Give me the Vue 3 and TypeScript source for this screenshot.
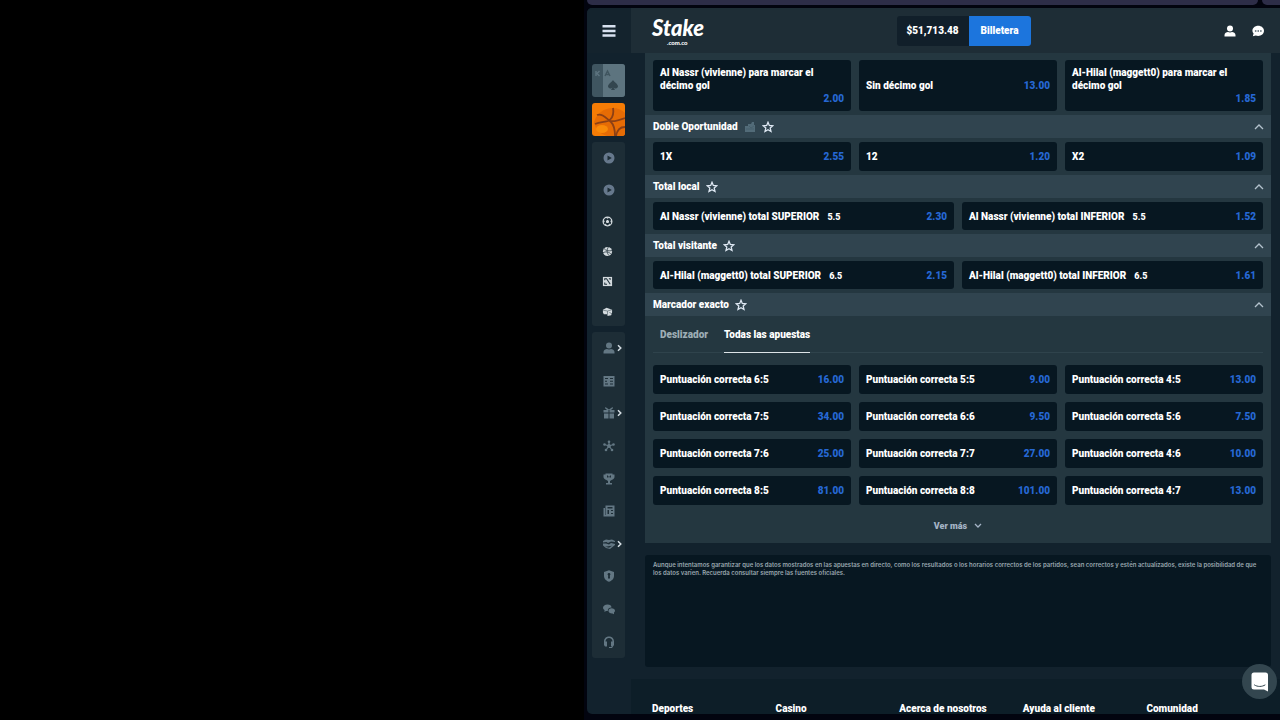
<script setup lang="ts">
import { ref } from 'vue'

interface Outcome {
  name: string
  odds: string
  line?: string
}

interface Market {
  title: string
  columns: 2 | 3
  combo?: boolean
  outcomes: Outcome[]
}

interface NavItem {
  icon: string
  label: string
  expandable?: boolean
}

const nextGoal: Outcome[] = [
  { name: 'Al Nassr (vivienne) para marcar el décimo gol', odds: '2.00' },
  { name: 'Sin décimo gol', odds: '13.00' },
  { name: 'Al-Hilal (maggett0) para marcar el décimo gol', odds: '1.85' },
]

const markets: Market[] = [
  {
    title: 'Doble Oportunidad',
    columns: 3,
    combo: true,
    outcomes: [
      { name: '1X', odds: '2.55' },
      { name: '12', odds: '1.20' },
      { name: 'X2', odds: '1.09' },
    ],
  },
  {
    title: 'Total local',
    columns: 2,
    outcomes: [
      { name: 'Al Nassr (vivienne) total SUPERIOR', line: '5.5', odds: '2.30' },
      { name: 'Al Nassr (vivienne) total INFERIOR', line: '5.5', odds: '1.52' },
    ],
  },
  {
    title: 'Total visitante',
    columns: 2,
    outcomes: [
      { name: 'Al-Hilal (maggett0) total SUPERIOR', line: '6.5', odds: '2.15' },
      { name: 'Al-Hilal (maggett0) total INFERIOR', line: '6.5', odds: '1.61' },
    ],
  },
]

const scores: Outcome[] = [
  ['6:5', '16.00'],
  ['5:5', '9.00'],
  ['4:5', '13.00'],
  ['7:5', '34.00'],
  ['6:6', '9.50'],
  ['5:6', '7.50'],
  ['7:6', '25.00'],
  ['7:7', '27.00'],
  ['4:6', '10.00'],
  ['8:5', '81.00'],
  ['8:8', '101.00'],
  ['4:7', '13.00'],
].map(([score, odds]) => ({ name: `Puntuación correcta ${score}`, odds }))

const sportsNav: NavItem[] = [
  { icon: 'play', label: 'En directo' },
  { icon: 'play', label: 'Próximos' },
  { icon: 'soccer', label: 'Fútbol' },
  { icon: 'ball', label: 'Baloncesto' },
  { icon: 'pitch', label: 'eSports' },
  { icon: 'box', label: 'Más deportes' },
]

const accountNav: NavItem[] = [
  { icon: 'user', label: 'Perfil', expandable: true },
  { icon: 'slip', label: 'Apuestas' },
  { icon: 'gift', label: 'Promociones', expandable: true },
  { icon: 'hub', label: 'Afiliado' },
  { icon: 'trophy', label: 'VIP' },
  { icon: 'news', label: 'Blog' },
  { icon: 'hands', label: 'Patrocinios', expandable: true },
  { icon: 'shield', label: 'Juego responsable' },
  { icon: 'chats', label: 'Foro' },
  { icon: 'headset', label: 'Soporte' },
]

const footerLinks = ['Deportes', 'Casino', 'Acerca de nosotros', 'Ayuda al cliente', 'Comunidad']
const tabs = ['Deslizador', 'Todas las apuestas']
const activeTab = ref('Todas las apuestas')
</script>

<template>
  <div class="stage">
    <div class="blank"></div>
    <div class="browser">
      <div class="tabstrip"><span class="strip-main"></span><span class="strip-end"></span></div>
      <div class="app">
        <aside class="sidebar">
          <button class="menu" aria-label="Menú">
            <svg viewBox="0 0 14 12" width="14" height="12"><path d="M.5 0h13v2.500H.5zM.5 4.700h13v2.500H.5zM.5 9.300h13v2.500H.5z" /></svg>
          </button>
          <nav class="rail">
            <a class="tile" href="#casino" aria-label="Casino">
              <svg viewBox="0 0 33 33">
                <rect width="33" height="33" rx="3" fill="#3f5560" />
                <path d="M11 0h19a3 3 0 0 1 3 3v27a3 3 0 0 1-3 3H11z" fill="#5d747f" />
                <path d="M4 7v5M7.500 7L5 9.500 7.500 12" stroke="#5d7480" stroke-width="1.400" fill="none" />
                <path d="M13 12l2.500-5 2.500 5M14 10.500h3" stroke="#40555f" stroke-width="1.400" fill="none" />
                <path d="M21 16c-1 2-5 4-5 6.500a2.500 2.500 0 0 0 4.500 1L19 26h4l-1.500-2.500a2.500 2.500 0 0 0 4.500-1c0-2.500-4-4.500-5-6.500z" fill="#33464f" />
              </svg>
            </a>
            <a class="tile" href="#deportes" aria-label="Deportes">
              <svg viewBox="0 0 33 33">
                <rect width="33" height="33" rx="3" fill="#f57c05" />
                <path d="M2 19C5 10 12 5 21 5c5 0 9 2 12 5v20a3 3 0 0 1-3 3H15C8 31 3 26 2 19z" fill="#e66c05" />
                <ellipse cx="10" cy="26" rx="6" ry="4" fill="#f98b09" />
                <path d="M5 12c5-2 9 3 14 7 3 3 4 8 4 14M21 5c1 6-1 11-5 13-4 1-9 1-13 3M18 18c5 1 10-1 15-3M33 24c-5 0-8 3-9 9" fill="none" stroke="#8c4015" stroke-width="1.800" />
              </svg>
            </a>
            <ul class="group sports">
              <li v-for="item in sportsNav" :key="item.label">
                <a href="#" :aria-label="item.label" :class="item.icon">
                  <svg v-if="item.icon === 'play'" viewBox="0 0 12 12" width="12" height="12"><path fill-rule="evenodd" d="M6 .5a5.500 5.500 0 1 0 0 11 5.500 5.500 0 0 0 0-11zM4.500 3.500L8.800 6 4.500 8.500z" /></svg>
                  <svg v-else-if="item.icon === 'soccer'" viewBox="0 0 12 12" width="11" height="11"><circle cx="6" cy="6" r="4.800" fill="none" stroke="currentColor" stroke-width="1.300" /><path d="M6 4.200l1.800 1.300-.6 2.100H4.800l-.6-2.100zM3.500 1.300h5L6 3zM1 4l2 1.500L1.500 8.500zM11 4L9 5.500l1.500 3zM2.800 10l1.300-1.800 1.500 2.800zM9.200 10L7.900 8.200 6.400 11z" /></svg>
                  <svg v-else-if="item.icon === 'ball'" viewBox="0 0 12 12" width="11" height="11"><circle cx="6" cy="6" r="5" /><path d="M2 2.500c2 3 6 3 9 2.500M7 1C5 4 5 8 8 10.700M1 7.500c3-2 7-1 9 1.500" fill="none" stroke="#1e2f38" stroke-width=".8" /></svg>
                  <svg v-else-if="item.icon === 'pitch'" viewBox="0 0 12 12" width="11" height="11"><path d="M1 1h10v10H1z" /><path d="M3 4.500V3h2l4 6M9 4V3H7.500M3 7v2h2.500" fill="none" stroke="#1e2f38" stroke-width="1.100" /></svg>
                  <svg v-else viewBox="0 0 12 12" width="11" height="11"><path d="M1 4l4-2 6 2v3l-1 3-4 1V9L2 9 1 7z" /><path d="M1 4.500l5 1L11 4M6 5.500V9M8 7l3 1.500" fill="none" stroke="#53636b" stroke-width=".7" /></svg>
                </a>
              </li>
            </ul>
            <ul class="group account">
              <li v-for="item in accountNav" :key="item.label">
                <a href="#" :aria-label="item.label">
                  <svg viewBox="0 0 12 12" width="12" height="12">
                    <template v-if="item.icon === 'user'"><circle cx="6" cy="3.500" r="3" /><path d="M.5 11.500v-1.500C.5 8 2.500 7 4 7c1 .6 3 .6 4 0 1.500 0 3.500 1 3.500 3v1.500z" /></template>
                    <path v-else-if="item.icon === 'slip'" fill-rule="evenodd" d="M.5 1h11v10.500H.5zM2 3v1h3V3zm5 0v1h3V3zM2 5.700v1h2v-1zm5 0v1h3v-1zM2 8.500v1h3v-1zm5 0v1h3v-1z" />
                    <path v-else-if="item.icon === 'gift'" d="M2.500 0L6 2.500 9.500 0l.5 1.200L8 3h3.500v2.500h-5V3h-1v2.500h-5V3H4L2 1.200zM1 6.500h4.500v5H1zM6.500 6.500H11v5H6.500z" />
                    <template v-else-if="item.icon === 'hub'"><path d="M6 6V2M6 6l4.500-1.500M6 6l3 4M6 6l-3 4M6 6L1.500 4.500" stroke="currentColor" stroke-width="1.200" /><circle cx="6" cy="6" r="1.900" /><circle cx="6" cy="1.700" r="1.300" /><circle cx="10.500" cy="4.500" r="1.300" /><circle cx="9" cy="10" r="1.300" /><circle cx="3" cy="10" r="1.300" /><circle cx="1.500" cy="4.500" r="1.300" /></template>
                    <path v-else-if="item.icon === 'trophy'" fill-rule="evenodd" d="M2.500.5h7v1h2v2.500c0 1.500-1.500 2.500-2.500 2.700L7 8v2h2v1.500H3V10h2V8L3 6.700C2 6.500.5 5.500.5 4V1.500h2zM4 2.500v2h1.500v-1h1v1H8v-2H7v.7H5v-.7z" />
                    <path v-else-if="item.icon === 'news'" fill-rule="evenodd" d="M2.500.5h9v11H.5V3H2v7h.5zM4.500 2v1.500h5V2zm0 3v4h1.500V5zM8 5v1h2V5zm0 3v1h2V8z" />
                    <path v-else-if="item.icon === 'hands'" d="M0 3l3-1.500 3 .5 3-.5L12 3v1L8 3.500 5 5 3.500 4 0 4.500zM0 5.500h3L6 6.500l2-1.500 4 1v1L7 11 3 10 0 7.500zM2 8.700l4 1 3-2-2 .3z" />
                    <path v-else-if="item.icon === 'shield'" fill-rule="evenodd" d="M6 .3l5 1.700v4c0 3-2.500 4.800-5 5.800C3.500 10.800 1 9 1 6V2zM6 3a1.300 1.300 0 0 0-.8 2.400L5 8.500h2l-.2-3.100A1.300 1.300 0 0 0 6 3z" />
                    <template v-else-if="item.icon === 'chats'"><path d="M4.500 1.500c2.500 0 4 1.200 4 2.900C6 4.500 4.500 6 4.800 8H3L1.500 9V7C.5 6.400 0 5.500 0 4.700 0 3 2 1.500 4.500 1.500z" /><path d="M8.500 5.300c2 0 3.500 1 3.500 2.500 0 .8-.4 1.400-1 1.800v1.600L9.500 10.400c-2.200.2-4-1-4-2.500s1.300-2.600 3-2.600z" /></template>
                    <path v-else d="M6 .5C2.800.5 1 2.800 1 5.500V9l1 1.500h2v-5H2.500C2.600 3.500 4 2 6 2s3.400 1.500 3.500 3.500H8v5l1.300-.2L8.500 11H6v1h3l2-3V5.500C11 2.800 9.200.5 6 .5z" />
                  </svg>
                  <svg v-if="item.expandable" class="more" viewBox="0 0 5 8" width="5" height="8"><path d="M1 1.200L3.800 4 1 6.800" fill="none" stroke="#d5dee4" stroke-width="1.500" /></svg>
                </a>
              </li>
            </ul>
          </nav>
        </aside>

        <div class="page">
          <header class="topbar">
            <a class="logo" href="#" aria-label="Stake.com.co"><span class="word">Stake</span><span class="domain">.com.co</span></a>
            <div class="wallet"><span class="balance">$51,713.48</span><button class="deposit">Billetera</button></div>
            <div class="actions">
              <button aria-label="Usuario"><svg viewBox="0 0 12 12" width="12" height="12"><circle cx="6" cy="3.500" r="3" /><path d="M.5 11.500V10C.5 8 2.500 7 4 7c1 .6 3 .6 4 0 1.500 0 3.500 1 3.500 3v1.500z" /></svg></button>
              <button aria-label="Chat"><svg viewBox="0 0 12 12" width="12" height="12"><path d="M6.200.7C9.400.7 12 2.900 12 5.800s-2.600 5.100-5.800 5.100c-.9 0-1.700-.1-2.400-.4L.8 11.300l.8-2.700C.8 7.900.4 6.900.4 5.800.4 2.900 3 .7 6.200.7z" /><path d="M2.900 5.200h1.500v1.500H2.900zM5.500 5.200H7v1.500H5.500zM8.100 5.200h1.500v1.500H8.100z" fill="#52636c" /></svg></button>
            </div>
          </header>

          <main class="content">
            <section class="markets">
              <div class="outcomes cols-3 tall">
                <button v-for="o in nextGoal" :key="o.name" class="outcome">
                  <span class="name">{{ o.name }}</span><span class="odds">{{ o.odds }}</span>
                </button>
              </div>
              <template v-for="market in markets" :key="market.title">
                <h2 class="market-head">
                  <span>{{ market.title }}</span>
                  <svg v-if="market.combo" class="combo" viewBox="0 0 12 12" width="12" height="12"><path d="M1 5h3V3h3l1-2h2v3h1v7H1z" /><path d="M2 8h8M5 5l2 2 3-2" fill="none" stroke="#435b67" stroke-width=".7" /></svg>
                  <svg class="star" viewBox="0 0 12 12" width="12" height="12"><path d="M6 1.300l1.300 3.200 3.500.3-2.600 2.300.8 3.400-3-1.800-3 1.800.8-3.400-2.600-2.300 3.500-.3z" /></svg>
                  <button class="toggle" :aria-label="`Contraer ${market.title}`"><svg viewBox="0 0 10 6" width="10" height="6"><path d="M1 5l4-4 4 4" /></svg></button>
                </h2>
                <div class="outcomes" :class="`cols-${market.columns}`">
                  <button v-for="o in market.outcomes" :key="o.name" class="outcome">
                    <span class="name">{{ o.name }}<span v-if="o.line" class="line">{{ o.line }}</span></span><span class="odds">{{ o.odds }}</span>
                  </button>
                </div>
              </template>
              <h2 class="market-head">
                <span>Marcador exacto</span>
                <svg class="star" viewBox="0 0 12 12" width="12" height="12"><path d="M6 1.300l1.300 3.200 3.500.3-2.600 2.300.8 3.400-3-1.800-3 1.800.8-3.400-2.600-2.300 3.500-.3z" /></svg>
                <button class="toggle" aria-label="Contraer Marcador exacto"><svg viewBox="0 0 10 6" width="10" height="6"><path d="M1 5l4-4 4 4" /></svg></button>
              </h2>
              <div class="tabs" role="tablist">
                <button v-for="tab in tabs" :key="tab" role="tab" :aria-selected="tab === activeTab" :class="{ active: tab === activeTab }" @click="activeTab = tab">{{ tab }}</button>
              </div>
              <div class="outcomes cols-3 scores">
                <button v-for="o in scores" :key="o.name" class="outcome">
                  <span class="name">{{ o.name }}</span><span class="odds">{{ o.odds }}</span>
                </button>
              </div>
              <button class="see-more">Ver más<svg viewBox="0 0 8 6" width="8" height="6"><path d="M1 1l3 3 3-3" /></svg></button>
            </section>

            <p class="notice">Aunque intentamos garantizar que los datos mostrados en las apuestas en directo, como los resultados o los horarios correctos de los partidos, sean correctos y estén actualizados, existe la posibilidad de que los datos varíen. Recuerda consultar siempre las fuentes oficiales.</p>
          </main>

          <footer class="footer">
            <h3 v-for="link in footerLinks" :key="link">{{ link }}</h3>
          </footer>
        </div>

        <button class="support" aria-label="Abrir chat de soporte">
          <svg viewBox="0 0 18 20" width="18" height="20"><path d="M3 .5h11.500a2.500 2.500 0 0 1 2.500 2.500v16.500l-4-2H3A2.500 2.500 0 0 1 .5 15V3A2.500 2.500 0 0 1 3 .5z" /><path d="M3.500 13c3 2 7.500 2 10.500 0" fill="none" stroke="#33464f" stroke-width="1" stroke-linecap="round" /></svg>
        </button>
      </div>
    </div>
  </div>
</template>

<style>
body {
  margin: 0;
  background: #000;
}
</style>

<style scoped>
.stage {
  display: grid;
  grid-template-columns: 584fr 696fr;
  grid-template-rows: minmax(0, 1fr);
  height: 100vh;
  overflow: hidden;
  background: #000;
  color: #fff;
  font: 900 10px/13px Roboto, "Liberation Sans", sans-serif;
}
.stage * {
  box-sizing: border-box;
}
button {
  margin: 0;
  padding: 0;
  border: 0;
  background: none;
  color: inherit;
  font: inherit;
  text-align: left;
  cursor: pointer;
}
svg {
  display: block;
  fill: currentColor;
}
.browser {
  display: flex;
  flex-direction: column;
  min-width: 0;
  padding: 0 0 6px 3px;
  background: #02040f;
}
.tabstrip {
  display: flex;
  flex: none;
  gap: 4px;
  height: 8px;
  padding-bottom: 3px;
}
.tabstrip span {
  background: #2d2d48;
}
.strip-main {
  flex: 1;
  border-radius: 0 0 5px 5px;
}
.strip-end {
  width: 18px;
  border-radius: 0 0 0 5px;
}
.app {
  position: relative;
  display: flex;
  flex: 1;
  min-height: 0;
  border-radius: 5px 0 0 5px;
  background: #12222d;
  overflow: hidden;
}
.sidebar {
  flex: none;
  width: 44px;
}
.menu {
  display: flex;
  align-items: center;
  justify-content: center;
  width: 100%;
  height: 45px;
  background: #14232d;
  color: #d8e1f0;
}
.rail {
  display: flex;
  flex-direction: column;
  gap: 6px;
  padding: 11px 6px 11px 5px;
}
.tile {
  height: 33px;
}
.group {
  display: flex;
  flex-direction: column;
  margin: 0;
  padding: 0;
  border-radius: 3px;
  background: #1d2d36;
  list-style: none;
}
.account {
  height: 326px;
}
.account li {
  display: grid;
  flex: 1;
}
.group a {
  position: relative;
  display: flex;
  align-items: center;
  justify-content: center;
  color: #637783;
}
.sports a {
  height: 30px;
  padding-right: 3px;
  color: #d3dade;
}
.sports a.play {
  height: 32px;
  padding-right: 0;
  color: #66788c;
}
.more {
  position: absolute;
  right: 3px;
}
.page {
  display: flex;
  flex: 1;
  flex-direction: column;
  min-width: 0;
}
.topbar {
  display: grid;
  grid-template-columns: 1fr auto 1fr;
  flex: none;
  align-items: center;
  height: 45px;
  padding: 0 5px 0 21px;
  background: #1e2d36;
}
.logo {
  display: flex;
  flex-direction: column;
  width: 54px;
  color: #fff;
  text-decoration: none;
}
.word {
  font: italic 900 22px/24px Lato, sans-serif;
}
.domain {
  padding-left: 15px;
  font: 900 6px/6px Lato, sans-serif;
}
.wallet {
  display: flex;
  height: 30px;
  border-radius: 3px;
  background: #111f2a;
  line-height: 30px;
  overflow: hidden;
}
.balance {
  width: 72px;
  text-align: center;
}
.deposit {
  width: 62px;
  background: #1c75dd;
  text-align: center;
}
.actions {
  display: flex;
  justify-content: flex-end;
  gap: 16px;
  padding-right: 11px;
}
.content {
  display: flex;
  flex: none;
  flex-direction: column;
  gap: 12px;
  padding: 0 9px 12px 14px;
}
.markets {
  background: #243740;
}
.outcomes {
  display: grid;
  gap: 8px;
  padding: 4px 8px;
}
.outcomes.tall {
  padding-top: 7px;
}
.cols-3 {
  grid-template-columns: repeat(3, 1fr);
  grid-auto-rows: 29px;
}
.cols-2 {
  grid-template-columns: repeat(2, 1fr);
  grid-auto-rows: 28px;
}
.outcomes.tall {
  grid-auto-rows: auto;
}
.scores {
  padding: 12px 8px 0;
}
.outcome {
  display: flex;
  align-items: center;
  justify-content: space-between;
  padding: 0 7px;
  border-radius: 3px;
  background: #071721;
}
.tall .outcome {
  flex-wrap: wrap;
  padding: 6px 7px;
}
.odds {
  margin-left: auto;
  color: #2668d4;
}
.line {
  margin-left: 8px;
  font-size: 9px;
  line-height: 9px;
}
.market-head {
  display: flex;
  align-items: center;
  gap: 6px;
  height: 23px;
  margin: 0;
  padding: 0 7px 0 8px;
  background: #30444f;
  font: inherit;
}
.combo {
  color: #526b78;
}
.star path,
.toggle path,
.see-more path {
  fill: none;
  stroke: currentColor;
  stroke-width: 1.3;
}
.star {
  color: #dfe9f4;
}
.toggle {
  margin-left: auto;
  color: #b3c2cd;
}
.tabs {
  display: flex;
  gap: 16px;
  height: 37px;
  margin: 0 8px;
  padding-left: 7px;
  border-bottom: 1px solid #2f434c;
}
.tabs button {
  height: 37px;
  border-bottom: 1px solid transparent;
  color: #9dadb5;
}
.tabs button.active {
  border-color: #dde4e8;
  color: #fff;
}
.see-more {
  display: flex;
  align-items: center;
  justify-content: center;
  gap: 7px;
  width: 100%;
  height: 38px;
  padding-top: 4px;
  color: #a5b4c6;
  font-size: 9px;
}
.notice {
  min-height: 112px;
  margin: 0;
  padding: 6px 7px 6px 8px;
  border-radius: 3px;
  background: #071721;
  color: #98a6ae;
  font: 600 6px/8px Inter, "Liberation Sans", sans-serif;
}
.footer {
  display: grid;
  grid-template-columns: repeat(5, 1fr);
  flex: 1 0 auto;
  padding: 23px 10px 0 21px;
  background: #0d1e28;
}
.footer h3 {
  margin: 0;
  font: inherit;
}
.support {
  position: absolute;
  right: 3px;
  bottom: 15px;
  display: flex;
  align-items: center;
  justify-content: center;
  width: 35px;
  height: 35px;
  border-radius: 50%;
  background: #33464f;
}
</style>
